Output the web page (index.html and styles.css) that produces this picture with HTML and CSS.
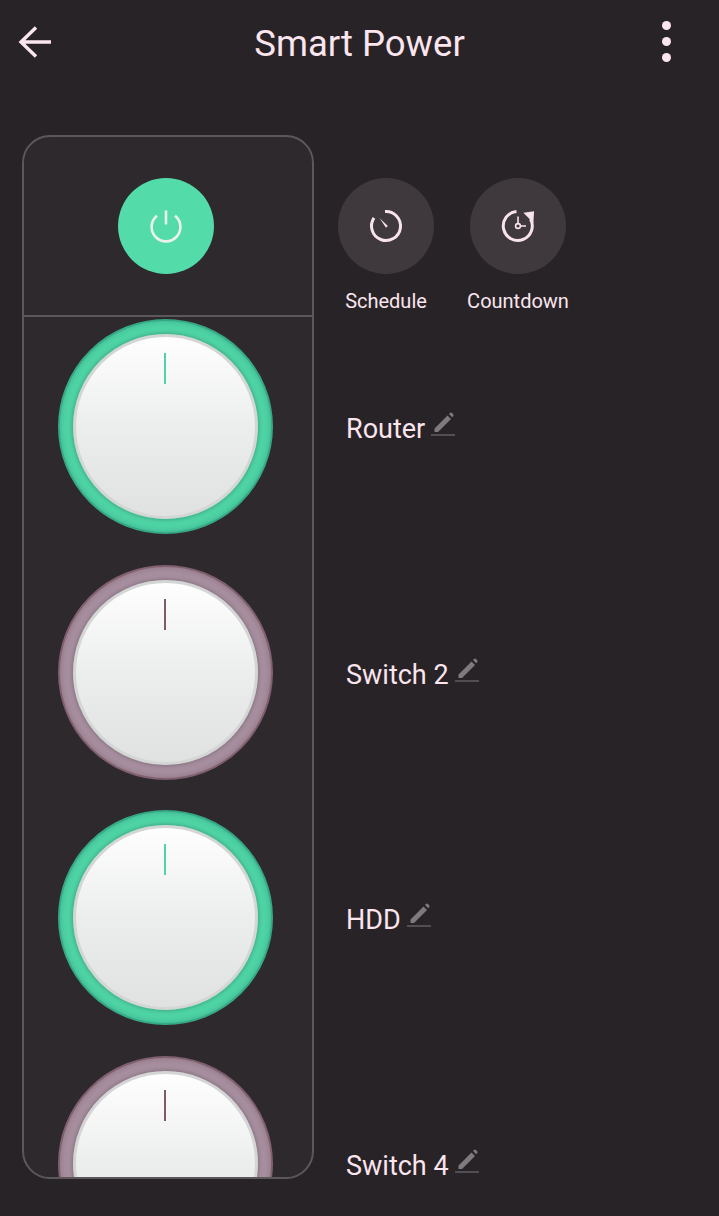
FILE: index.html
```html
<!DOCTYPE html>
<html lang="en">
<head>
  <meta charset="UTF-8">
  <meta name="viewport" content="width=device-width, initial-scale=1.0">
  <title>Smart Power</title>
  <link rel="stylesheet" href="styles.css">
</head>
<body>
  <!-- Top bar -->
  <header class="topbar">
    <button class="icon-btn back-btn" aria-label="Back">
      <svg width="34" height="34" viewBox="0 0 34 34"><path d="M33 16H3M18 1.500 3 16l15 14.500" fill="none" stroke="currentColor" stroke-width="3.400"/></svg>
    </button>
    <h1 class="title">Smart Power</h1>
    <button class="icon-btn more-btn" aria-label="More">
      <span class="dot"></span><span class="dot"></span><span class="dot"></span>
    </button>
  </header>

  <main class="content">
    <!-- Left panel with the sockets -->
    <section class="panel">
      <div class="panel-top">
        <button class="power-btn" aria-label="Power">
          <svg width="36" height="36" viewBox="0 0 36 36"><path d="M18 2.500v14M9 7.700a14.400 14.400 0 1 0 18 0" fill="none" stroke="currentColor" stroke-width="2.600"/></svg>
        </button>
      </div>
      <div class="knobs">
        <div class="knob on"><div class="disc"><span class="marker"></span></div></div>
        <div class="knob off"><div class="disc"><span class="marker"></span></div></div>
        <div class="knob on"><div class="disc"><span class="marker"></span></div></div>
        <div class="knob off"><div class="disc"><span class="marker"></span></div></div>
      </div>
    </section>

    <!-- Right column -->
    <section class="side">
      <div class="actions">
        <div class="action">
          <button class="action-btn" aria-label="Schedule">
            <svg width="36" height="36" viewBox="0 0 36 36">
              <path d="M17 3.540A14.500 14.500 0 1 1 6 9.900" fill="none" stroke="currentColor" stroke-width="3"/>
              <path d="M11.500 10 19.800 18 18 19.800Z" fill="currentColor"/>
            </svg>
          </button>
          <span class="action-label">Schedule</span>
        </div>
        <div class="action">
          <button class="action-btn" aria-label="Countdown">
            <svg width="36" height="36" viewBox="0 0 36 36">
              <path d="M16.500 3.500A14.500 14.500 0 1 0 30.500 11" fill="none" stroke="currentColor" stroke-width="3"/>
              <path d="M25.500 5.500 33 4.500 32.500 12.500Z" fill="currentColor" stroke="currentColor" stroke-width="2"/>
              <path d="M18 8.500V15.500M20.500 18H26" fill="none" stroke="currentColor" stroke-width="1.600"/>
              <circle cx="18" cy="18" r="2.400" fill="none" stroke="currentColor" stroke-width="1.600"/>
            </svg>
          </button>
          <span class="action-label">Countdown</span>
        </div>
      </div>
      <div class="names">
        <div class="name"><span>Router</span><svg class="pencil" width="24" height="25" viewBox="0 0 24 25"><path d="M3.500 17.500 16.500 4.500l3.500 3.500L7 21H3.500ZM18 3l1-1q1-.8 2 0l1.200 1.200q.8 1 0 2l-1 1Z" fill="currentColor"/><path d="M0 24H24" stroke="currentColor" stroke-width="1"/></svg></div>
        <div class="name"><span>Switch 2</span><svg class="pencil" width="24" height="25" viewBox="0 0 24 25"><path d="M3.500 17.500 16.500 4.500l3.500 3.500L7 21H3.500ZM18 3l1-1q1-.8 2 0l1.200 1.200q.8 1 0 2l-1 1Z" fill="currentColor"/><path d="M0 24H24" stroke="currentColor" stroke-width="1"/></svg></div>
        <div class="name"><span>HDD</span><svg class="pencil" width="24" height="25" viewBox="0 0 24 25"><path d="M3.500 17.500 16.500 4.500l3.500 3.500L7 21H3.500ZM18 3l1-1q1-.8 2 0l1.200 1.200q.8 1 0 2l-1 1Z" fill="currentColor"/><path d="M0 24H24" stroke="currentColor" stroke-width="1"/></svg></div>
        <div class="name"><span>Switch 4</span><svg class="pencil" width="24" height="25" viewBox="0 0 24 25"><path d="M3.500 17.500 16.500 4.500l3.500 3.500L7 21H3.500ZM18 3l1-1q1-.8 2 0l1.200 1.200q.8 1 0 2l-1 1Z" fill="currentColor"/><path d="M0 24H24" stroke="currentColor" stroke-width="1"/></svg></div>
      </div>
    </section>
  </main>
</body>
</html>
```

FILE: styles.css
```css
/* Page */
body {
  margin: 0;
  height: 1216px;
  overflow: hidden;
  background: #282327;
  color: #fbe5ee;
  font-family: 'Roboto', sans-serif;
}

button {
  padding: 0;
  border: none;
  background: none;
  color: inherit;
}

/* Top bar */
.topbar {
  display: grid;
  grid-template-columns: 1fr auto 1fr;
  align-items: center;
  height: 88px;
  padding: 0 18px;
}

.icon-btn {
  display: flex;
}

.back-btn {
  justify-self: start;
  margin-top: -2px;
}

.more-btn {
  justify-self: end;
  flex-direction: column;
  gap: 7px;
  margin: -6px 30px 0 0;
}

.dot {
  width: 9px;
  height: 9px;
  border-radius: 50%;
  background: #fbe5ee;
}

.title {
  margin: 0;
  font-size: 36.500px;
  font-weight: 400;
  line-height: 88px;
}

/* Main area */
.content {
  display: flex;
  gap: 24px;
  padding: 47px 0 0 22px;
}

/* Left panel */
.panel {
  box-sizing: border-box;
  width: 292px;
  height: 1044px;
  border: 2px solid #5c575a;
  border-radius: 28px;
  background: #2e292d;
  overflow: hidden;
}

.panel-top {
  box-sizing: border-box;
  display: flex;
  justify-content: center;
  height: 180px;
  padding: 41px 4px 0 0;
  border-bottom: 2px solid #5c575a;
}

.power-btn {
  display: flex;
  align-items: center;
  justify-content: center;
  width: 96px;
  height: 96px;
  border-radius: 50%;
  background: #53dbaa;
  color: #ebf2ee;
}

.knobs {
  display: flex;
  flex-direction: column;
  align-items: center;
  gap: 30.500px;
  padding: 2px 6px 0 0;
}

.knob {
  box-sizing: border-box;
  flex: none;
  display: flex;
  align-items: center;
  justify-content: center;
  width: 215px;
  height: 215px;
  border-radius: 50%;
  border: 2px solid;
}

.knob.on {
  border-color: #37a886;
  background: #4fd4a5;
  box-shadow: inset 0 0 6px #3cb28e;
  color: #4fd4a5;
}

.knob.off {
  border-color: #80606f;
  background: #a78f9f;
  box-shadow: inset 0 0 6px #8d7183;
  color: #7e5a6a;
}

.disc {
  box-sizing: border-box;
  display: flex;
  justify-content: center;
  width: 185px;
  height: 185px;
  padding-top: 16px;
  border: 3px solid #d3d6d5;
  border-radius: 50%;
  background: linear-gradient(180deg, #fefefe 0%, #eceeed 50%, #dfe2e1 100%);
  box-shadow: 0 0 5px rgba(0, 0, 0, 0.3);
}

.marker {
  width: 2px;
  height: 31px;
  background: currentColor;
}

/* Right column */
.side {
  flex: 1;
}

.actions {
  box-sizing: border-box;
  display: flex;
  gap: 36px;
  height: 274px;
  padding-top: 43px;
}

.action {
  display: flex;
  flex-direction: column;
  align-items: center;
  gap: 16px;
  width: 96px;
}

.action-btn {
  display: flex;
  align-items: center;
  justify-content: center;
  flex: none;
  width: 96px;
  height: 96px;
  border-radius: 50%;
  background: #3f393d;
  color: #f9e3ea;
}

.action-label {
  font-size: 20px;
  line-height: 22px;
  white-space: nowrap;
}

.names {
  display: flex;
  flex-direction: column;
  gap: 205.500px;
  padding-left: 8px;
}

.name {
  display: flex;
  align-items: center;
  gap: 6px;
  height: 40px;
  font-size: 27px;
}

.pencil {
  color: #7f7a7d;
  margin-top: -11px;
}
```
